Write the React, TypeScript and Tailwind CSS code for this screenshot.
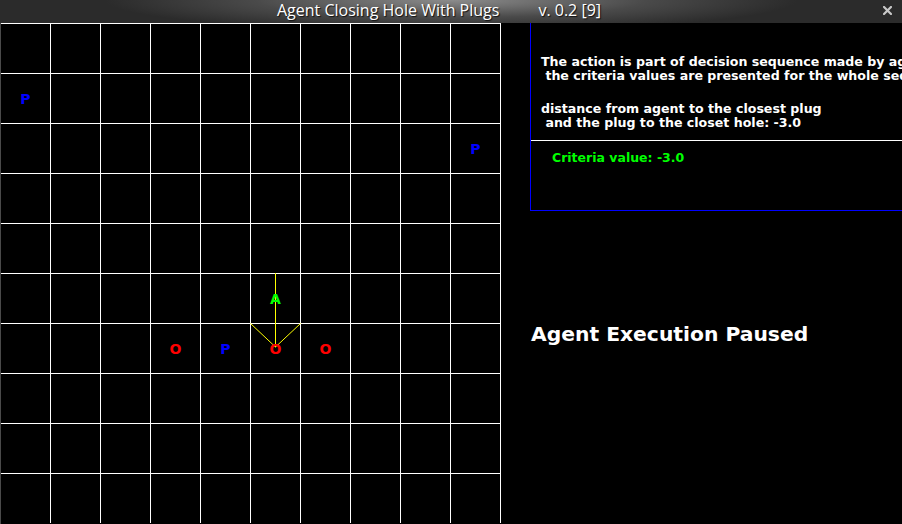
import React from "react";

type Piece = { r: number; c: number; ch: string; color: string };

const pieces: Piece[] = [
  { r: 1, c: 0, ch: "P", color: "text-[#0000ff]" },
  { r: 2, c: 9, ch: "P", color: "text-[#0000ff]" },
  { r: 5, c: 5, ch: "A", color: "text-[#00ff00]" },
  { r: 6, c: 3, ch: "O", color: "text-[#ff0000]" },
  { r: 6, c: 4, ch: "P", color: "text-[#0000ff]" },
  { r: 6, c: 5, ch: "O", color: "text-[#ff0000]" },
  { r: 6, c: 6, ch: "O", color: "text-[#ff0000]" },
];

function Board() {
  const cells = [];
  for (let r = 0; r < 10; r++) {
    for (let c = 0; c < 10; c++) {
      const p = pieces.find((x) => x.r === r && x.c === c);
      cells.push(
        <div
          key={`${r}-${c}`}
          className="flex items-center justify-center border-t border-r border-white"
        >
          {p && (
            <span
              className={`relative font-bold text-[14px] leading-none ${p.color}`}
              style={{ fontFamily: '"DejaVu Sans", sans-serif' }}
            >
              {p.ch}
            </span>
          )}
        </div>
      );
    }
  }
  return (
    <div className="relative w-[500px] h-[501px] bg-black">
      <svg
        className="absolute left-0 top-0"
        width="500"
        height="501"
        viewBox="0 0 500 501"
      >
        <line x1="274.5" y1="250" x2="274.5" y2="324" stroke="#ffff00" strokeWidth="1" />
        <line x1="249.5" y1="300.5" x2="274.5" y2="324" stroke="#ffff00" strokeWidth="1" />
        <line x1="299.5" y1="300.5" x2="274.5" y2="324" stroke="#ffff00" strokeWidth="1" />
      </svg>
      <div className="grid grid-cols-[repeat(10,50px)] grid-rows-[repeat(10,50px)]">
        {cells}
      </div>
    </div>
  );
}

export default function App() {
  const dv = { fontFamily: '"DejaVu Sans", "Liberation Sans", sans-serif' };
  return (
    <div className="w-[902px] h-[524px] bg-black overflow-hidden flex flex-col">
      {/* title bar */}
      <div
        className="h-[23px] shrink-0 flex items-start bg-[radial-gradient(ellipse_48%_170%_at_50%_0%,#8c8c8c_0%,#4a4a4a_45%,#2b2b2b_80%)]"
        style={{ fontFamily: '"Open Sans", "DejaVu Sans", sans-serif' }}
      >
        <span className="pl-[277px] text-[16px] leading-[21px] font-medium text-white [text-shadow:1px_1px_1px_#111]">
          Agent Closing Hole With Plugs
        </span>
        <span className="pl-[39px] text-[16px] leading-[21px] font-medium text-white [text-shadow:1px_1px_1px_#111]">
          v. 0.2 [9]
        </span>
        <svg className="ml-auto mr-[10px] mt-[6px]" width="9" height="9" viewBox="0 0 9 9">
          <path d="M1 1 L8 8 M8 1 L1 8" stroke="#c8c8c8" strokeWidth="2.2" strokeLinecap="square" />
        </svg>
      </div>

      {/* body */}
      <div className="flex flex-1 min-h-0">
        <div className="w-[1px] bg-[#4a4a4a] shrink-0" />
        <Board />
        <div className="flex-1 border-r border-[#8a8a8a] flex flex-col" style={dv}>
          <div className="ml-[29px] h-[188px] border-l border-b border-[#0000ff] flex flex-col">
            <div className="h-[117px] pl-[10px] pt-[32px] text-white font-bold text-[12.6px] leading-[14px] whitespace-pre overflow-hidden">
              <div>The action is part of decision sequence made by agent</div>
              <div> the criteria values are presented for the whole sequence</div>
              <div className="mt-[19px]">distance from agent to the closest plug</div>
              <div> and the plug to the closet hole: -3.0</div>
            </div>
            <div className="h-[1px] bg-white" />
            <div className="pl-[21px] pt-[10px] text-[#00ff00] font-bold text-[12.5px] leading-[14px]">
              Criteria value: -3.0
            </div>
          </div>
          <div className="pl-[30px] mt-[111px] text-white font-bold text-[20.3px] leading-[24px] whitespace-nowrap">
            Agent Execution Paused
          </div>
        </div>
      </div>
    </div>
  );
}
